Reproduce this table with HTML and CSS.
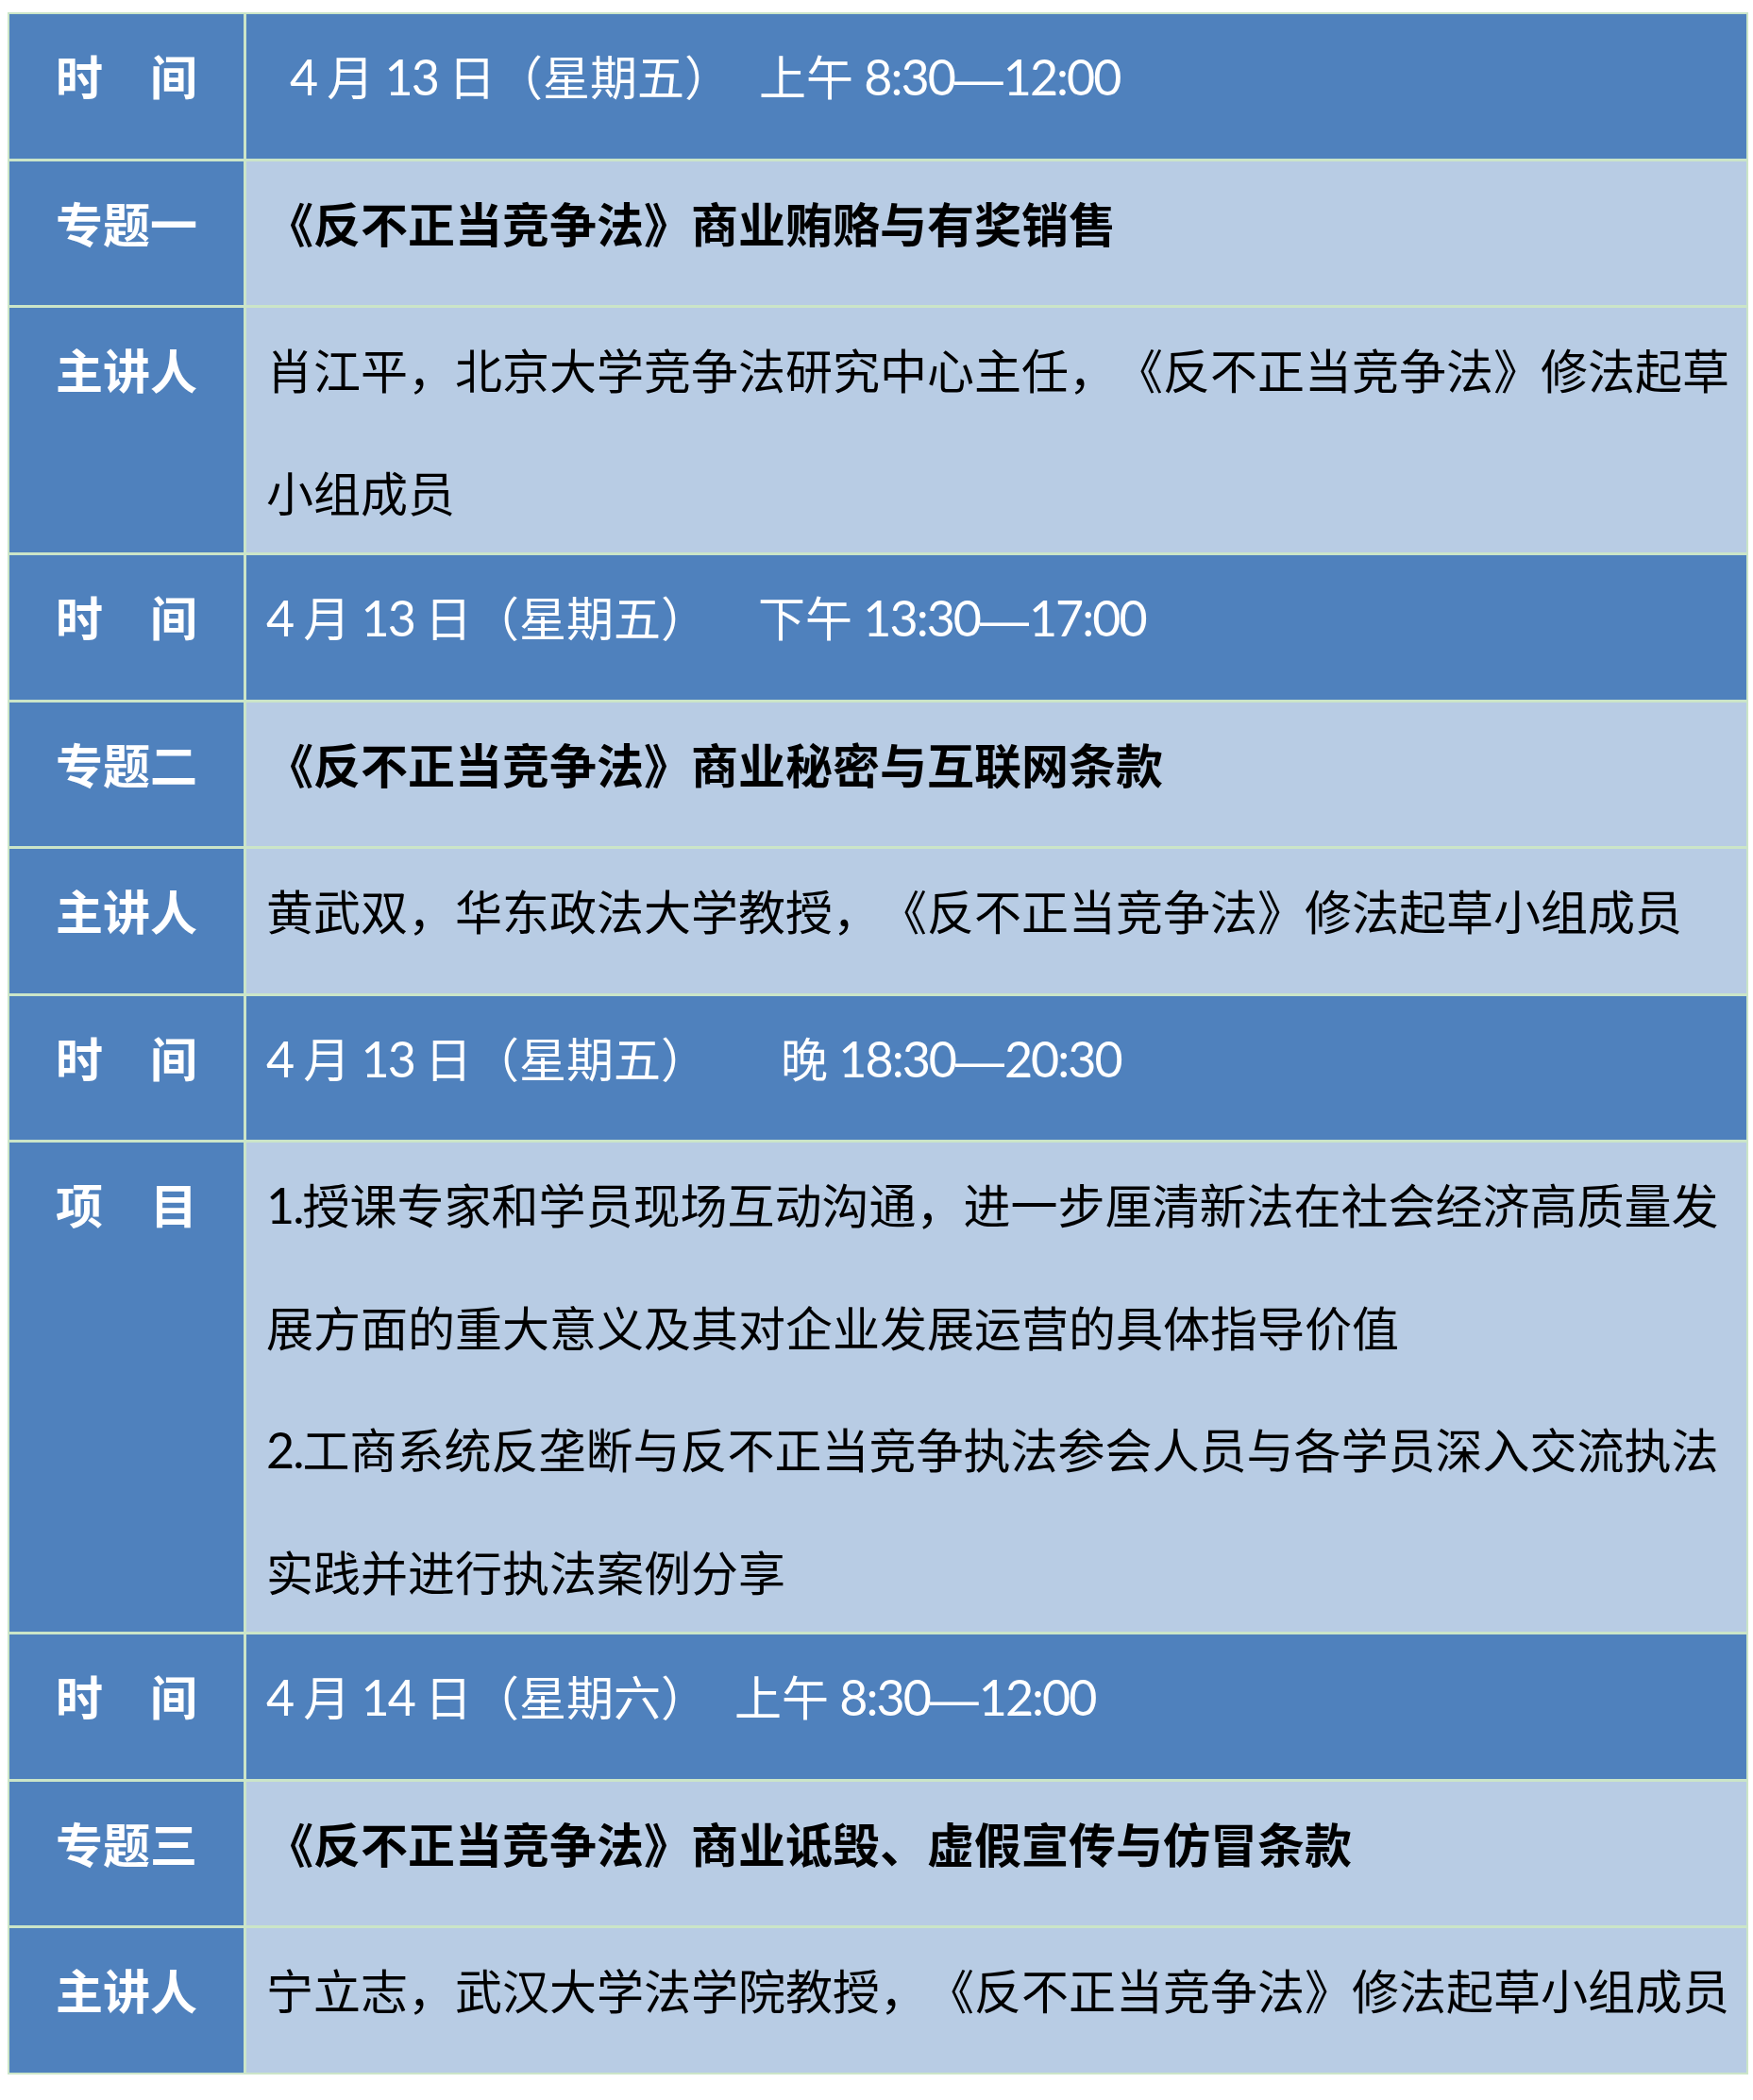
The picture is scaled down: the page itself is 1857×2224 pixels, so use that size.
FILE: index.html
```html
<!DOCTYPE html>
<html lang="zh-CN">
<head>
<meta charset="utf-8">
<title>日程安排</title>
<link rel="stylesheet" href="styles.css">
</head>
<body>
<div class="schedule">
  <div class="label row1">时　间</div>
  <div class="cell dark row1"><div class="indent"><span class="num">4</span> 月 <span class="num">13</span> 日（星期五）<span class="gap gap-s"></span>上午 <span class="num">8:30</span><span class="dash">—</span><span class="num">12:00</span></div></div>

  <div class="label row1">专题一</div>
  <div class="cell light row1 strong">《反不正当竞争法》商业贿赂与有奖销售</div>

  <div class="label">主讲人</div>
  <div class="cell light">肖江平，北京大学竞争法研究中心主任，《反不正当竞争法》修法起草<br>小组成员</div>

  <div class="label row1">时　间</div>
  <div class="cell dark row1"><span class="num">4</span> 月 <span class="num">13</span> 日（星期五）<span class="gap gap-m"></span>下午 <span class="num">13:30</span><span class="dash">—</span><span class="num">17:00</span></div>

  <div class="label row1">专题二</div>
  <div class="cell light row1 strong">《反不正当竞争法》商业秘密与互联网条款</div>

  <div class="label row1">主讲人</div>
  <div class="cell light row1">黄武双，华东政法大学教授，《反不正当竞争法》修法起草小组成员</div>

  <div class="label row1">时　间</div>
  <div class="cell dark row1"><span class="num">4</span> 月 <span class="num">13</span> 日（星期五）<span class="gap gap-l"></span>晚 <span class="num">18:30</span><span class="dash">—</span><span class="num">20:30</span></div>

  <div class="label">项　目</div>
  <div class="cell light"><span class="num">1.</span>授课专家和学员现场互动沟通，进一步厘清新法在社会经济高质量发<br>展方面的重大意义及其对企业发展运营的具体指导价值<br><span class="num">2.</span>工商系统反垄断与反不正当竞争执法参会人员与各学员深入交流执法<br>实践并进行执法案例分享</div>

  <div class="label row1">时　间</div>
  <div class="cell dark row1"><span class="num">4</span> 月 <span class="num">14</span> 日（星期六）<span class="gap gap-s2"></span>上午 <span class="num">8:30</span><span class="dash">—</span><span class="num">12:00</span></div>

  <div class="label row1">专题三</div>
  <div class="cell light row1 strong">《反不正当竞争法》商业诋毁、虚假宣传与仿冒条款</div>

  <div class="label row1">主讲人</div>
  <div class="cell light row1">宁立志，武汉大学法学院教授，《反不正当竞争法》修法起草小组成员</div>
</div>
</body>
</html>
```

FILE: styles.css
```css
html, body {
  margin: 0;
  padding: 0;
  background: #ffffff;
}

.schedule {
  margin: 13px 0 0 8px;
  width: 1844px;
  box-sizing: border-box;
  padding: 2px;
  display: grid;
  grid-template-columns: 248px 1589px;
  column-gap: 3px;
  row-gap: 3px;
  background: #cbe5c8;
  font-family: "Noto Sans CJK SC", "Noto Sans", sans-serif;
  font-size: 50px;
  line-height: 129.5px;
  text-spacing-trim: space-all;
  font-kerning: none;
}

.label {
  background: #4f81bd;
  color: #ffffff;
  font-weight: 700;
  text-align: center;
  white-space: nowrap;
}

.cell {
  padding: 0 6px 0 21px;
  white-space: nowrap;
  color: #000000;
}

.row1 {
  min-height: 152.5px;
}

.dark {
  background: #4f81bd;
  color: #ffffff;
}

.light {
  background: #b8cce4;
}

.strong {
  font-weight: 700;
}

.indent {
  padding-left: 25px;
}

.num {
  font-family: "Lato", "Liberation Sans", sans-serif;
  font-size: 52px;
  letter-spacing: -2px;
  line-height: 1;
}

.dash {
  font-family: "Liberation Sans", sans-serif;
  font-size: 52px;
  line-height: 1;
}

.gap {
  display: inline-block;
  height: 1px;
}

.gap-s { width: 29px; }
.gap-s2 { width: 28px; }
.gap-m { width: 53px; }
.gap-l { width: 77px; }
```
